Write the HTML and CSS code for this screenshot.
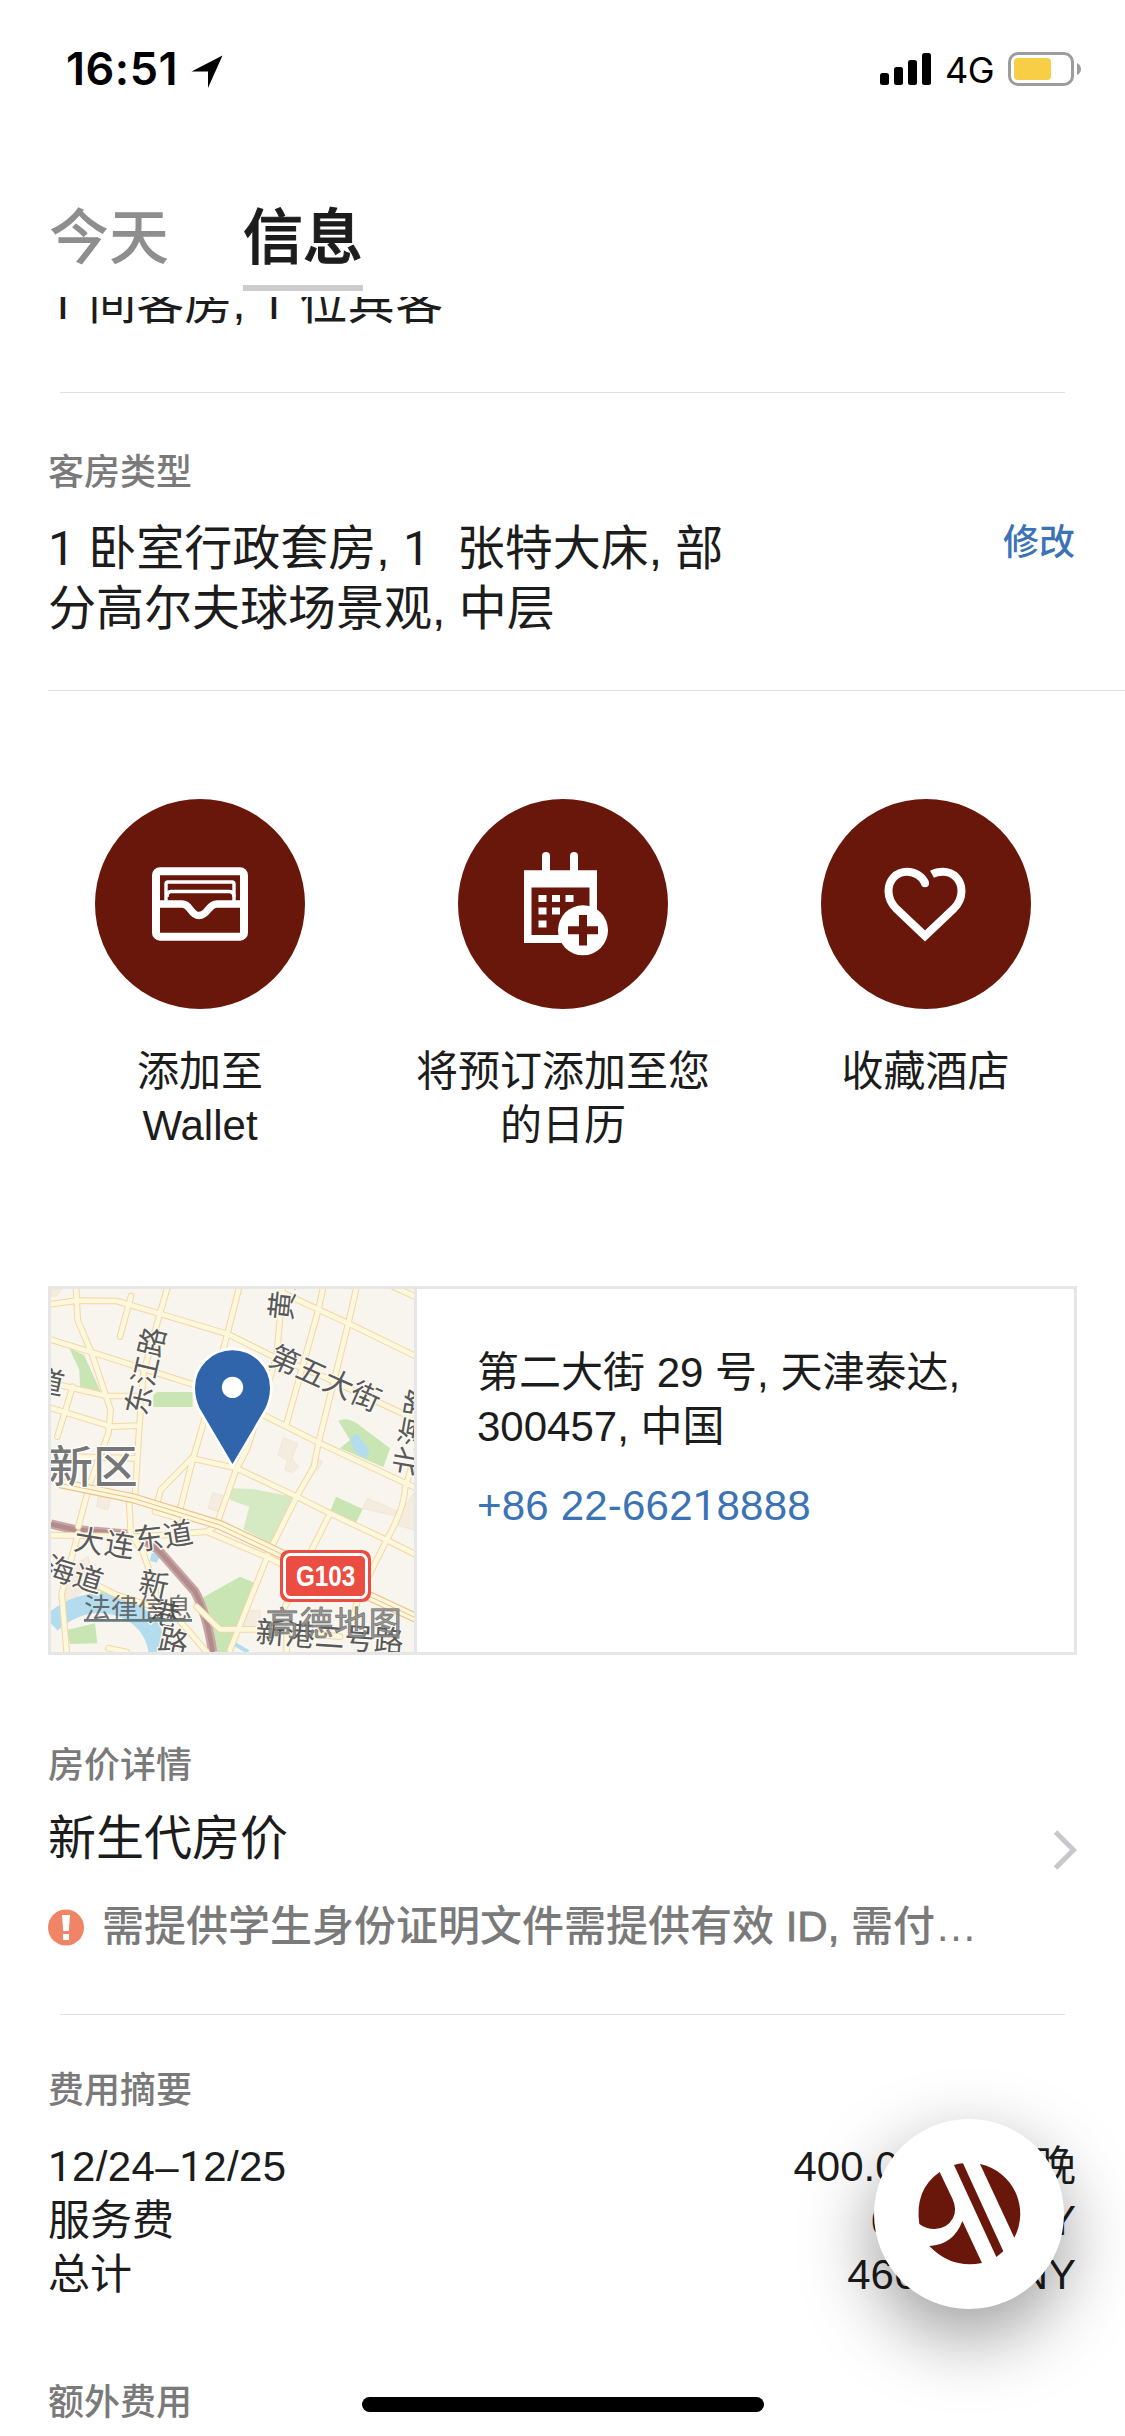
FILE: index.html
```html
<!DOCTYPE html>
<html lang="zh-CN">
<head>
<meta charset="utf-8">
<title>预订信息</title>
<link rel="stylesheet" href="styles.css">
</head>
<body>
<div class="screen">
  <div class="status">
    <div class="status-left">
      <span class="clock">16:51</span>
      <svg class="loc" width="32" height="34" viewBox="0 0 32 34"><path d="M31.500 .5 L17 33 V16.500 H.5 Z" fill="#000"/></svg>
    </div>
    <div class="status-right">
      <svg width="52" height="32" viewBox="0 0 52 32"><rect y="20" width="9" height="12" rx="2.500"/><rect x="14" y="14" width="9" height="18" rx="2.500"/><rect x="28" y="7" width="9" height="25" rx="2.500"/><rect x="42" width="9" height="32" rx="2.500"/></svg>
      <span class="net">4G</span>
      <svg class="battery" width="74" height="34" viewBox="0 0 74 34"><rect x="1.500" y="1.500" width="63" height="31" rx="8.500" fill="#fff" stroke="#9c9c9c" stroke-width="3"/><rect x="6" y="6" width="37" height="22" rx="4" fill="#f7ce46"/><path d="M69 11 Q73 13 73 17 T69 23Z" fill="#9c9c9c"/></svg>
    </div>
  </div>

  <nav class="tabs">
    <span class="tab">今天</span>
    <span class="tab active">信息</span>
  </nav>

  <main class="content">
    <div class="guests"><p class="body-lg"><span class="one">1</span> 间客房, <span class="one">1</span> 位宾客</p></div>

    <section class="room">
      <h2 class="label">客房类型</h2>
      <div class="room-row">
        <p class="body-lg"><span class="one">1</span> 卧室行政套房, <span class="one">1</span>&nbsp; 张特大床, 部<br>分高尔夫球场景观, 中层</p>
        <a class="edit">修改</a>
      </div>
    </section>

    <section class="actions">
      <div class="action">
        <div class="disc">
          <svg width="210" height="210" viewBox="95 799 210 210"><g fill="none" stroke="#fff">
            <rect x="156" y="871.200" width="88" height="65.500" rx="4" stroke-width="8"/>
            <path d="M166 903 V884 Q166 882 168 882 H232 Q234 882 234 884 V903" stroke-width="3.400"/>
            <path d="M167 897 Q167 891.500 171 891.500 H229 Q234 891.500 234 897" stroke-width="3.400"/>
            <path d="M157 904 H182 C191 904 190 915.500 199 915.500 C208 915.500 208 904 217 904 H243" stroke-width="7.400"/></g></svg>
        </div>
        <p class="caption">添加至<br>Wallet</p>
      </div>
      <div class="action">
        <div class="disc">
          <svg width="210" height="210" viewBox="458 799 210 210">
            <g fill="#fff"><rect x="542" y="852" width="8" height="24" rx="4"/><rect x="570" y="852" width="8" height="24" rx="4"/>
            <path fill-rule="evenodd" d="M524 870.300H597V943H524Z M531.500 887.500V935H589.500V887.500Z"/>
            <path d="M538.500 895h8v7h-8z M552 895h8v7h-8z M565.500 895h8v7h-8z M538.500 907.500h8v7h-8z M552 907.500h8v7h-8z M538.500 920.500h8v7h-8z"/>
            <circle cx="583" cy="930.300" r="25"/></g>
            <path d="M583 915V945.500M568 930.300H598" stroke="#69170b" stroke-width="8"/></svg>
        </div>
        <p class="caption">将预订添加至您<br>的日历</p>
      </div>
      <div class="action">
        <div class="disc">
          <svg width="210" height="210" viewBox="820.500 799 210 210"><path d="M924.500 883 C922 877 915 871.800 906.500 871.800 C896 871.800 888 880 888 891 C888 898 891 904 896 909 L924.500 936 L953 909 C958 904 961 898 961 891 C961 880 953 871.800 942.500 871.800 Q936 871.800 931.500 874.300" fill="none" stroke="#fff" stroke-width="8"/><circle cx="924.500" cy="883.200" r="4" fill="#fff"/></svg>
        </div>
        <p class="caption">收藏酒店</p>
      </div>
    </section>

    <section class="place">
      <svg class="map" width="363" height="363" viewBox="33 57 1089 1089">
        <rect x="33" y="57" width="1089" height="1089" fill="#f8f5ef"/>
        <g fill="#c8e5b3">
          <path d="M88 235 L132 255 L182 365 L120 350 L118 300Z"/><path d="M352 366H458V411H340V375Z"/>
          <path d="M895 452 Q920 440 950 460 L1050 535 L1030 592 L900 535 L930 510Z"/>
          <path d="M888 680 L968 717 L948 758 L872 720Z"/><path d="M485 985 L600 920 L646 940 L570 1146H530L505 1040Z"/>
          <path d="M570 655 L640 657 L760 680 L700 825 L610 778 L628 710 L570 690Z" fill="#d5eac3"/>
          <path d="M150 930 L230 965 L220 1000 L145 985Z"/>
        </g>
        <g fill="#f5ece0" stroke="#eedfcf" stroke-width="2">
          <path d="M730 503L773 520L755 565L777 590L755 608L735 600L742 570L714 555Z"/><path d="M518 668L552 677L535 725L504 715Z"/><path d="M820 560L847 575L832 603L808 595Z"/><path d="M983 685L1082 728L1122 668V780L1070 765L1078 740L968 715Z"/><path d="M176 665L215 675L203 720L170 710Z"/><path d="M33 57H65L50 78H33Z"/><path d="M612 1022H660V1075H604Z"/><path d="M75 900L145 860L160 930L100 990L55 990Z"/>
        </g>
        <path d="M33 1060 Q130 975 240 1010 Q340 1045 355 1146" fill="none" stroke="#b3dcee" stroke-width="58"/>
        <path d="M80 1080 L165 1060 L172 1120 L90 1122Z" fill="#c8e5b3"/>
        <path d="M930 508L950 490L988 540L978 566L945 545Z M335 850L365 850L350 878L330 872Z" fill="#b3dcee"/>
        <path d="M580 1120L625 1146" stroke="#b3dcee" stroke-width="12"/>
        <path d="M33 762L100 778L290 795L355 840L465 965Q500 1030 518 1146" fill="none" stroke="#c8a5a4" stroke-width="28"/>
        <path d="M33 762L100 778L290 795L355 840L465 965Q500 1030 518 1146" fill="none" stroke="#b28c8c" stroke-width="14"/>
        <defs>
          <g id="roads" fill="none" stroke-linecap="round" stroke-linejoin="round">
            <path d="M20 104L110 92L230 93L365 133L565 193L690 255L850 320L1130 450"/>
            <path d="M20 205L150 245L370 315L480 350L680 440L840 520L1130 655"/>
            <path d="M730 70L925 160L1130 260 M1060 50L1130 82"/>
            <path d="M108 50L113 150L155 250L212 420L205 490L150 640L115 770 M273 78L240 200"/>
            <path d="M383 50L350 165L310 310L298 470L285 680L268 700L272 790L310 850L345 950L350 1010"/>
            <path d="M598 50L560 200L490 460L455 580L415 740"/>
            <path d="M728 50L710 260L620 540L590 595L535 750"/>
            <path d="M850 50L835 120L740 460"/><path d="M950 50L925 160L835 520L822 590L770 680L690 840L570 1140"/>
            <path d="M20 336L200 378H300 M20 410L215 470L295 467 M98 350L52 500"/>
            <path d="M100 560L285 565 M455 565L590 595L770 680L870 730L1040 810L1130 855"/>
            <path d="M455 565L362 660L345 725L415 745 M1115 590L1095 655Q1095 710 1040 810L955 980L935 1060"/>
            <path d="M870 730L810 850L735 1010 M20 795L310 800L500 785L540 760"/>
            <path d="M500 785L690 865L760 900 M115 790L65 970L80 1146"/>
            <path d="M150 935L230 975L400 1030L500 1146 M470 1010L540 1078H680L900 1100 M205 1135L260 1146 M740 1080V1146"/>
          </g>
          <path id="trunk" d="M60 640L280 685L540 765L720 850L980 975L1130 1045" fill="none"/>
        </defs>
        <use href="#roads" stroke="#f3d6a6" stroke-width="20"/><use href="#roads" stroke="#fdf8dc" stroke-width="14"/>
        <use href="#trunk" stroke="#edc18a" stroke-width="30"/><use href="#trunk" stroke="#fdf8dc" stroke-width="23"/>
        <use href="#trunk" stroke="#edc18a" stroke-width="3"/>
        <g class="streets">
          <text transform="translate(753 154) rotate(-84)">黄海</text>
          <text transform="translate(318 440) rotate(-77)">东江路</text>
          <text transform="translate(680 282) rotate(24)">第五大街</text>
          <text transform="translate(-22 358) rotate(12)">道</text>
          <text transform="translate(1126 622) rotate(-80)">北海路</text>
          <text x="98 190 286 376" y="838 850 842 832" rotate="9 9 -7 -10">大连东道</text>
          <text transform="translate(8 918) rotate(17)">海道</text>
          <text x="292 322 350" y="965 1052 1138" rotate="12">新港路</text>
          <text transform="translate(645 1117) rotate(4)">新港二号路</text>
        </g>
        <text class="district" x="25" y="638">新区</text>
        <rect x="720" y="840" width="273" height="156" rx="26" fill="#eb4d43"/><rect x="733.500" y="853.500" width="246" height="129" rx="18" fill="none" stroke="#fff" stroke-width="9"/>
        <text class="shield" x="857" y="947" textLength="178" lengthAdjust="spacingAndGlyphs">G103</text>
        <text class="legal" x="132" y="1043">法律信息</text><path d="M132 1051H456" stroke="#66787c" stroke-width="8"/>
        <text class="brand" x="677" y="1096" textLength="408">高德地图</text>
        <path d="M577.500 582 L479 415 Q465 385 465 353 A112.500 112.500 0 0 1 690 353 Q690 385 676 415Z" fill="#3064ab" stroke="#fff" stroke-width="16" paint-order="stroke"/>
        <circle cx="577.500" cy="352" r="32" fill="#fff"/>
      </svg>
      <div class="address">
        <p class="body-md">第二大街 29 号, 天津泰达,<br>300457, 中国</p>
        <a class="phone">+86 22-662<span class="one">1</span>8888</a>
      </div>
    </section>

    <section class="rate">
      <h2 class="label">房价详情</h2>
      <div class="rate-row">
        <p class="body-lg">新生代房价</p>
        <svg class="chevron" width="24" height="40" viewBox="0 0 24 40"><path d="M2.500 2L20.500 20L2.500 38" fill="none" stroke="#c7c7cc" stroke-width="5"/></svg>
      </div>
      <div class="notice">
        <svg width="36" height="37" viewBox="0 0 36 37"><circle cx="18" cy="18.500" r="18" fill="#f08466"/><path d="M14 6H22L20.800 22H15.200Z" fill="#fff"/><rect x="15" y="25" width="6" height="6" fill="#fff"/></svg>
        <p>需提供学生身份证明文件需提供有效 <span class="latin">ID,</span> 需付…</p>
      </div>
    </section>

    <section class="summary">
      <h2 class="label">费用摘要</h2>
      <div class="line"><span class="dates"><span class="one">1</span>2/24–<span class="one">1</span>2/25</span><span>400.00 CNY/晚</span></div>
      <div class="line"><span>服务费</span><span>66.40 CNY</span></div>
      <div class="line"><span>总计</span><span>466.40 CNY</span></div>
    </section>
    <h2 class="label extra">额外费用</h2>
  </main>

  <div class="fab">
    <svg width="190" height="190" viewBox="102 -3 570 570"><g fill="#69170b">
      <path d="M299 156L338 238Q352 270 339 294Q323 325 284 327Q257 327 238 312Q223 209 299 156Z"/>
      <path d="M268 378Q341 374 367 303L426 429Q334 447 268 378Z"/>
      <path d="M342 135Q355 131 369 130L490 394L469 411Z"/>
      <path d="M420 132A153 153 0 0 1 523 353Z"/></g></svg>
  </div>
  <div class="home"></div>
</div>
</body>
</html>
```
FILE: styles.css
```css
* { box-sizing: border-box; margin: 0; padding: 0; }
body { background: #fff; color: #1c1c1c; font-family: "Liberation Sans", "Noto Sans CJK SC", sans-serif; }
svg { display: block; flex: none; }
.screen { position: relative; width: 1125px; height: 2436px; overflow: hidden; background: #fff; display: flex; flex-direction: column; }
.one { font-family: Roboto, sans-serif; line-height: 1; }

.status { height: 203px; flex: none; padding: 43px 43px 0 66px; display: flex; justify-content: space-between; align-items: flex-start; font-family: Inter, sans-serif; color: #000; }
.status-left, .status-right { display: flex; align-items: center; height: 52px; }
.clock { font-size: 45px; font-weight: 600; letter-spacing: .5px; width: 125px; line-height: 52px; }
.loc { margin-top: 6px; }
.net { font-size: 36px; line-height: 52px; width: 75px; padding-left: 13px; letter-spacing: -.5px; margin-top: 2px; }
.battery { margin-left: 1px; }

.tabs { height: 94px; flex: none; padding-left: 49px; display: flex; gap: 74px; align-items: flex-start; }
.tab { font-size: 60px; line-height: 72px; font-weight: 500; color: #8e8e8e; padding-bottom: 10px; border-bottom: 6px solid transparent; }
.tab.active { color: #1c1c1c; -webkit-text-stroke: 1px #1c1c1c; border-color: #ccc; }

.content { flex: 1; overflow: hidden; padding-left: 48px; }
.label { font-size: 36px; line-height: 42px; font-weight: 500; color: #7a7a7a; }
.body-lg { font-size: 48px; line-height: 60px; }
.body-md { font-size: 42px; line-height: 54px; }

.guests { display: flow-root; height: 96px; margin: 0 60px 0 12px; border-bottom: 1px solid #e0e0e0; }
.guests .body-lg { margin: -24px 0 0 -12px; }

.room { height: 298px; padding-top: 59px; border-bottom: 1px solid #e0e0e0; }
.room-row { display: flex; justify-content: space-between; padding: 25px 50px 0 0; }
.edit { font-size: 36px; line-height: 42px; font-weight: 500; color: #3b73b5; padding-top: 3px; }

.actions { height: 595px; padding-top: 108px; display: grid; grid-template-columns: 304px 422px 303px; }
.action { display: flex; flex-direction: column; align-items: center; gap: 36px; }
.disc { width: 210px; height: 210px; border-radius: 50%; background: #69170b; }
.caption { font-size: 42px; line-height: 54px; text-align: center; white-space: nowrap; }

.place { width: 1029px; height: 369px; border: 3px solid #e6e6e6; display: flex; }
.address { flex: 1; border-left: 3px solid #e6e6e6; padding: 57px 0 0 60px; }
.phone { display: block; font-size: 42px; line-height: 54px; letter-spacing: .2px; color: #3b73b5; margin-top: 25px; }
.streets text { font-size: 89px; fill: #595959; stroke: #fbf9f3; stroke-width: 8px; paint-order: stroke; }
.district { font-size: 134px; font-weight: 500; fill: #777; stroke: #fff; stroke-width: 8px; paint-order: stroke; }
.shield { font-family: "Liberation Sans", sans-serif; font-size: 88px; font-weight: 700; fill: #fff; text-anchor: middle; }
.legal { font-size: 81px; fill: #444; fill-opacity: .75; }
.brand { font-size: 99px; font-weight: 400; fill: #8a8a8a; fill-opacity: .9; stroke: #6e6e6e; stroke-width: 2px; }

.rate { height: 359px; padding-top: 90px; }
.rate::after { content: ""; display: block; height: 1px; background: #e0e0e0; margin: 60px 60px 0 12px; }
.rate-row { display: flex; justify-content: space-between; padding: 22px 48px 0 0; }
.chevron { margin-top: 21px; }
.notice { display: flex; align-items: center; gap: 18px; margin-top: 30px; font-size: 42px; line-height: 54px; font-weight: 500; color: #7a7a7a; }
.latin { -webkit-text-stroke: .8px #7a7a7a; }

.summary { padding: 56px 49px 0 0; }
.summary .label { margin-bottom: 28px; }
.line { display: flex; justify-content: space-between; font-size: 42px; line-height: 54px; }
.dates { letter-spacing: .4px; }
.extra { margin-top: 80px; }

.fab { position: absolute; left: 874px; top: 2119px; width: 190px; height: 190px; border-radius: 50%; background: #fff; box-shadow: 0 27px 75px rgba(0,0,0,.4); }
.home { position: absolute; left: 362px; top: 2397px; width: 402px; height: 15px; border-radius: 8px; background: #000; }
```
